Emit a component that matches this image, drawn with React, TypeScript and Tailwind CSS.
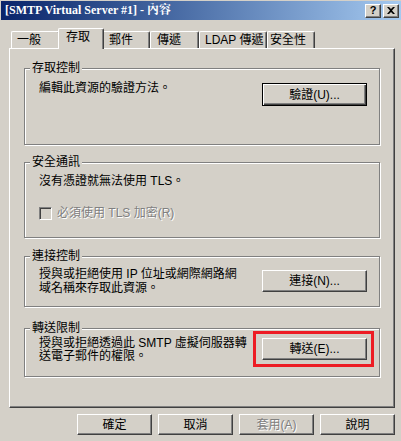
import type { ReactNode } from 'react'

const font = "font-['Liberation_Sans','Noto_Sans_CJK_TC',sans-serif]"
const raised =
  'bg-[#d4d0c8] border border-t-white border-l-white border-r-[#404040] border-b-[#404040] shadow-[inset_-1px_-1px_0_#808080]'

function Button({ label, w = 'w-[75px]', h = 'h-[21px]', isDefault = false, disabled = false }: {
  label: ReactNode
  w?: string
  h?: string
  isDefault?: boolean
  disabled?: boolean
}) {
  const frame = isDefault
    ? 'bg-[#d4d0c8] border border-black shadow-[inset_1px_1px_0_#fff,inset_-1px_-1px_0_#404040,inset_-2px_-2px_0_#808080]'
    : raised
  return (
    <button
      className={`${w} ${h} ${frame} shrink-0 flex items-center justify-center text-[12px] leading-[14px] ${
        disabled ? 'text-[#808080] [text-shadow:1px_1px_0_#fff]' : 'text-black'
      }`}
    >
      {label}
    </button>
  )
}

function Group({ title, h, mt, children }: { title: string; h: string; mt: string; children: ReactNode }) {
  return (
    <fieldset
      className={`${h} ${mt} w-[356px] border border-[#808080] shadow-[1px_1px_0_#fff,inset_1px_1px_0_#fff]`}
    >
      <legend className="ml-[5px] px-[2px] bg-[#d4d0c8] leading-[14px]">{title}</legend>
      {children}
    </fieldset>
  )
}

const tabs = [
  { label: '一般', w: 'w-[49px]', pl: 'pl-[5px]' },
  { label: '存取', w: 'w-[46px]', pl: 'pl-[5px]', active: true },
  { label: '郵件', w: 'w-[48px]', pl: 'pl-[6px]' },
  { label: '傳遞', w: 'w-[49px]', pl: 'pl-[6px]' },
  { label: 'LDAP 傳遞', w: 'w-[68px]', pl: 'pl-[5px]' },
  { label: '安全性', w: 'w-[48px]', pl: 'pl-[2px]' },
]

export default function App() {
  return (
    <div className={`w-[401px] h-[441px] bg-[#d4d0c8] pt-[1px] pl-[1px] overflow-hidden text-[12px] text-black ${font}`}>
      {/* Title bar */}
      <div className="h-[19px] bg-linear-to-r from-[#0a246a] to-[#a6caf0] flex items-center pl-[4px] pr-[2px]">
        <span className="font-['Liberation_Serif','Noto_Serif_CJK_TC','Noto_Sans_CJK_TC',serif] font-bold text-white text-[12px] leading-[15px] whitespace-nowrap">
          [SMTP Virtual Server #1] - 內容
        </span>
        <div className="ml-auto flex gap-[2px]">
          <div className={`w-[16px] h-[14px] ${raised} flex items-center justify-center text-[11px] font-bold leading-none font-['Liberation_Sans',sans-serif]`}>
            ?
          </div>
          <div className={`w-[16px] h-[14px] ${raised} flex items-center justify-center`}>
            <svg width="8" height="7" viewBox="0 0 8 7">
              <path d="M0 0h2l2 2 2-2h2L5 3.5 8 7H6L4 5 2 7H0l3-3.5z" fill="#000" />
            </svg>
          </div>
        </div>
      </div>

      <div className="ml-[8px] mt-[8px]">
        {/* Tabs */}
        <div className="flex items-end h-[20px] pl-[2px]">
          {tabs.map((t) =>
            t.active ? (
              <div
                key={t.label}
                className={`${t.w} h-[21px] -mx-[2px] -mb-[1px] relative z-10 bg-[#d4d0c8] rounded-t-[2px] border-t border-l border-r border-t-white border-l-white border-r-[#404040] shadow-[inset_-1px_0_0_#808080] pl-[7px] pt-[1px] leading-[14px] whitespace-nowrap`}
              >
                {t.label}
              </div>
            ) : (
              <div
                key={t.label}
                className={`${t.w} h-[17px] ${t.pl} rounded-t-[2px] border-t border-l border-r border-t-white border-l-white border-r-[#404040] shadow-[inset_-1px_0_0_#808080] leading-[14px] pt-[1px] whitespace-nowrap`}
              >
                {t.label}
              </div>
            )
          )}
        </div>

        {/* Panel */}
        <div className="w-[386px] h-[360px] border border-t-white border-l-white border-r-[#404040] border-b-[#404040] shadow-[inset_-1px_-1px_0_#808080] pl-[14px] pt-[12px]">
          <Group title="存取控制" h="h-[84px]" mt="mt-0">
            <div className="flex items-start justify-between pl-[14px] pr-[12px]">
              <span className="mt-[6px] leading-[14px]">編輯此資源的驗證方法。</span>
              <div className="mt-[8px]">
                <Button label="驗證(U)..." w="w-[105px]" h="h-[23px]" isDefault />
              </div>
            </div>
          </Group>

          <Group title="安全通訊" h="h-[83px]" mt="mt-[10px]">
            <div className="pl-[14px]">
              <div className="mt-[5px] leading-[14px]">沒有憑證就無法使用 TLS。</div>
              <div className="mt-[18px] flex items-center gap-[5px]">
                <div className="w-[13px] h-[13px] bg-[#d4d0c8] border border-t-[#808080] border-l-[#808080] border-r-white border-b-white shadow-[inset_1px_1px_0_#404040,inset_-1px_-1px_0_#d4d0c8]" />
                <span className="leading-[14px] text-[#808080] [text-shadow:1px_1px_0_#fff]">必須使用 TLS 加密(R)</span>
              </div>
            </div>
          </Group>

          <Group title="連接控制" h="h-[58px]" mt="mt-[11px]">
            <div className="flex items-start justify-between pl-[14px] pr-[12px]">
              <span className="mt-[4px] leading-[14px] whitespace-nowrap">
                授與或拒絕使用 IP 位址或網際網路網
                <br />
                域名稱來存取此資源。
              </span>
              <div className="mt-[7px]">
                <Button label="連接(N)..." w="w-[105px]" h="h-[22px]" />
              </div>
            </div>
          </Group>

          <Group title="轉送限制" h="h-[56px]" mt="mt-[14px]">
            <div className="flex items-start justify-between pl-[14px] pr-[12px]">
              <span className="mt-[2px] leading-[13px] whitespace-nowrap">
                授與或拒絕透過此 SMTP 虛擬伺服器轉
                <br />
                送電子郵件的權限。
              </span>
              <div className="mt-[3px] relative">
                <Button label="轉送(E)..." w="w-[105px]" h="h-[22px]" />
                <div className="absolute -left-[9px] -top-[7px] -right-[7px] -bottom-[7px] border-[3px] border-[#ed1c24]" />
              </div>
            </div>
          </Group>
        </div>

        {/* Dialog buttons */}
        <div className="mt-[6px] ml-[68px] flex gap-[6px]">
          <Button label="確定" />
          <Button label="取消" />
          <Button label="套用(A)" disabled />
          <Button label="說明" />
        </div>
      </div>
    </div>
  )
}
